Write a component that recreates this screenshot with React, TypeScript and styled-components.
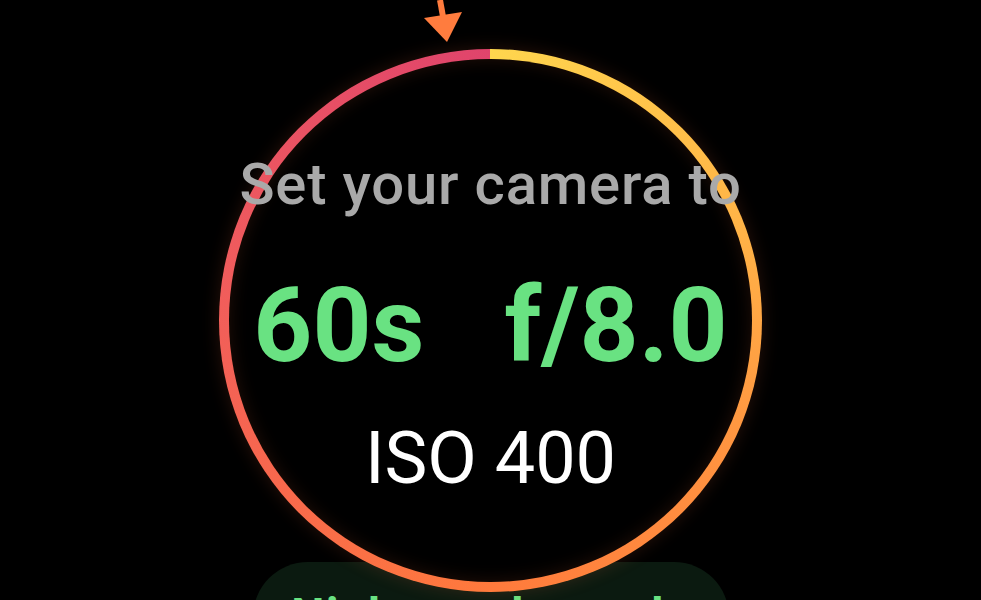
import React from "react";
import styled, { createGlobalStyle } from "styled-components";

const COLORS = {
  BG: "#000000",
  GREEN: "#69e282",
  MUTED: "#a9a9a9",
  ARROW: "#ff7c3e",
  PILL: "#0b1a10",
};

const GlobalStyle = createGlobalStyle`
  html, body {
    margin: 0;
    padding: 0;
    background: ${COLORS.BG};
    overflow: hidden;
  }
  body {
    font-family: Roboto, "Noto Sans", "Liberation Sans", sans-serif;
  }
`;

const Stage = styled.main`
  width: 100%;
  height: 600px;
  overflow: hidden;
  box-sizing: border-box;
  padding-top: 49px;
  display: flex;
  flex-direction: column;
  align-items: center;
`;

const RingHolder = styled.div`
  position: relative;
  z-index: 1;
`;

const Ring = styled.div`
  width: 543px;
  height: 543px;
  box-sizing: border-box;
  padding: 10px;
  border-radius: 50%;
  background: conic-gradient(
    from 0deg,
    #ffd64e 0deg,
    #ffb347 70deg,
    #ff9340 120deg,
    #ff7a3c 180deg,
    #f8694c 230deg,
    #f05c5c 280deg,
    #e0446c 360deg
  );
  box-shadow: 0 0 18px rgba(255, 110, 60, 0.16);
`;

const Face = styled.div`
  width: 100%;
  height: 100%;
  box-sizing: border-box;
  border-radius: 50%;
  background: ${COLORS.BG};
  box-shadow: inset 0 0 18px rgba(255, 110, 60, 0.14);
  padding-top: 96px;
  display: flex;
  flex-direction: column;
  align-items: center;
`;

const Heading = styled.div`
  font-size: 58px;
  line-height: 1;
  font-weight: 500;
  letter-spacing: 0.8px;
  color: ${COLORS.MUTED};
  white-space: nowrap;
`;

const Settings = styled.div`
  margin-top: 61px;
  display: flex;
  gap: 80px;
  font-size: 103px;
  line-height: 1;
  font-weight: 700;
  color: ${COLORS.GREEN};
  white-space: nowrap;
`;

const Iso = styled.div`
  margin-top: 46px;
  font-size: 72px;
  line-height: 1;
  font-weight: 400;
  color: #ffffff;
  white-space: nowrap;
`;

const Pointer = styled.svg`
  position: absolute;
  top: -49px;
  left: 201px;
`;

const ActionPill = styled.button`
  margin-top: -30px;
  flex-shrink: 0;
  width: 476px;
  height: 110px;
  box-sizing: border-box;
  padding: 29px 0 0;
  border: none;
  border-radius: 56px;
  background: ${COLORS.PILL};
  color: ${COLORS.GREEN};
  font-family: inherit;
  font-size: 47px;
  line-height: 1;
  font-weight: 700;
  letter-spacing: 1.5px;
  white-space: nowrap;
  display: flex;
  justify-content: center;
  align-items: flex-start;
`;

function Arrow() {
  return (
    <Pointer width="50" height="46" viewBox="0 0 50 46">
      <line x1="20" y1="0" x2="24" y2="22" stroke={COLORS.ARROW} strokeWidth="6" />
      <polygon points="4,18 42,12 27,42" fill={COLORS.ARROW} />
    </Pointer>
  );
}

export default function App() {
  return (
    <>
      <GlobalStyle />
      <Stage>
        <RingHolder>
          <Arrow />
          <Ring>
            <Face>
              <Heading>Set your camera to</Heading>
              <Settings>
                <span>60s</span>
                <span>f/8.0</span>
              </Settings>
              <Iso>ISO 400</Iso>
            </Face>
          </Ring>
        </RingHolder>
        <ActionPill>Night mode ready</ActionPill>
      </Stage>
    </>
  );
}
